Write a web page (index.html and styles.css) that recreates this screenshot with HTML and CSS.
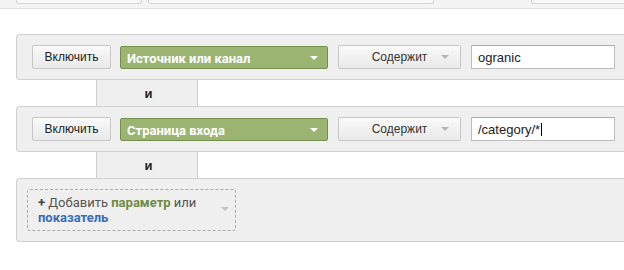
FILE: index.html
```html
<!DOCTYPE html>
<html lang="ru">
<head>
    <meta charset="UTF-8">
    <title>Фильтр сегмента</title>
    <link rel="stylesheet" href="styles.css">
</head>
<body>
    <div class="topbar">
        <div class="tab tab-first"></div>
        <div class="tab tab-second"></div>
        <div class="tab tab-last"></div>
    </div>

    <div class="filters">
        <div class="panel">
            <button class="btn btn-include">Включить</button>
            <div class="dimension">Источник или канал<span class="arrow arrow-white"></span></div>
            <div class="btn btn-match">Содержит<span class="arrow arrow-gray"></span></div>
            <div class="value">ogranic</div>
        </div>

        <div class="joiner">и</div>

        <div class="panel">
            <button class="btn btn-include">Включить</button>
            <div class="dimension">Страница входа<span class="arrow arrow-white"></span></div>
            <div class="btn btn-match">Содержит<span class="arrow arrow-gray"></span></div>
            <div class="value">/category/*<span class="caret"></span></div>
        </div>

        <div class="joiner">и</div>

        <div class="panel panel-add">
            <div class="add-box">
                <span class="plus">+</span> Добавить <b class="green">параметр</b> или <b class="blue">показатель</b>
                <span class="arrow arrow-gray"></span>
            </div>
        </div>
    </div>
</body>
</html>
```

FILE: styles.css
```css
body {
    margin: 0;
    background-color: #fff;
    font-family: "Liberation Sans", Arial, sans-serif;
    font-size: 12px;
    color: #222;
    overflow: hidden;
}

/* strip of tabs cut off at the top */
.topbar {
    display: flex;
    height: 8px;
    background-color: #f3f3f3;
    border-bottom: 1px solid #e2e2e2;
    padding-left: 16px;
}

.tab {
    height: 3px;
    background-color: #f8f8f8;
    border: 1px solid #d4d4d4;
    border-top: none;
    border-radius: 0 0 3px 3px;
}

.tab-first {
    width: 124px;
}

.tab-second {
    width: 284px;
    margin-left: 6px;
}

.tab-last {
    flex: 1;
    margin-left: 97px;
    border-right: none;
    border-radius: 0 0 0 3px;
}

.filters {
    padding: 25px 0 0 16px;
}

.panel {
    display: flex;
    align-items: center;
    height: 44px;
    padding-left: 15px;
    background-color: #efefef;
    border: 1px solid #cfcfcf;
    border-right: none;
    border-radius: 4px 0 0 4px;
}

.btn {
    box-sizing: border-box;
    height: 24px;
    background: linear-gradient(#f9f9f9, #e9e9e9);
    border: 1px solid #c8c8c8;
    border-radius: 2px;
    font-family: "Liberation Sans", Arial, sans-serif;
    font-size: 12px;
    color: #222;
}

.btn-include {
    width: 79px;
    padding: 0;
}

.dimension {
    position: relative;
    box-sizing: border-box;
    width: 208px;
    height: 23px;
    margin-left: 9px;
    padding: 4px 0 0 6px;
    background-color: #9bb471;
    border: 1px solid #748f4c;
    border-radius: 2px;
    font-family: Roboto, sans-serif;
    font-weight: bold;
    font-size: 13px;
    color: #fff;
}

.btn-match {
    position: relative;
    width: 123px;
    margin-left: 10px;
    padding-top: 4px;
    text-align: center;
    color: #333;
}

.value {
    box-sizing: border-box;
    width: 144px;
    height: 24px;
    margin-left: 10px;
    padding: 4px 0 0 6px;
    background-color: #fff;
    border: 1px solid #bdbdbd;
    border-top-color: #a9a9a9;
    font-size: 13px;
}

.caret {
    display: inline-block;
    width: 1px;
    height: 13px;
    margin-left: 1px;
    vertical-align: -2px;
    background-color: #000;
}

.arrow {
    position: absolute;
    width: 0;
    height: 0;
    border-left: 4px solid transparent;
    border-right: 4px solid transparent;
}

.arrow-white {
    right: 9px;
    top: 9px;
    border-top: 4px solid #fff;
}

.arrow-gray {
    right: 11px;
    top: 9px;
    border-top: 4px solid #b5b5b5;
}

.joiner {
    box-sizing: border-box;
    width: 102px;
    height: 26px;
    margin-left: 80px;
    padding: 6px 0 0 3px;
    background-color: #efefef;
    border-left: 1px solid #cfcfcf;
    border-right: 1px solid #cfcfcf;
    text-align: center;
    font-weight: bold;
    font-size: 13px;
}

.panel-add {
    height: 62px;
    padding-left: 10px;
}

.add-box {
    position: relative;
    box-sizing: border-box;
    width: 209px;
    height: 42px;
    padding: 5px 30px 0 10px;
    border: 1px dashed #ababab;
    border-radius: 3px;
    font-family: Roboto, sans-serif;
    font-size: 13px;
    line-height: 15px;
    color: #555;
}

.add-box .arrow-gray {
    top: 17px;
    right: 6px;
    border-top-color: #c2c2c2;
}

.plus {
    font-weight: bold;
    color: #444;
}

.green {
    color: #6e8b45;
}

.blue {
    color: #3a6db5;
}
```
